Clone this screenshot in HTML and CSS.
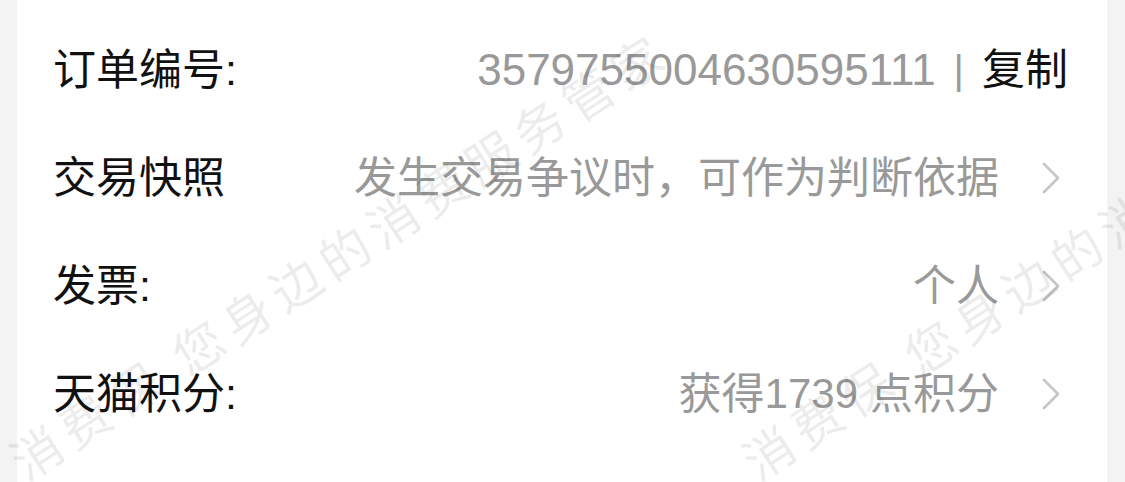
FILE: index.html
```html
<!DOCTYPE html>
<html lang="zh-CN">
<head>
<meta charset="utf-8">
<title>订单信息</title>
<link rel="stylesheet" href="styles.css">
</head>
<body>
<div class="page">
  <div class="card">
    <div class="row">
      <span class="label">订单编号:</span>
      <span class="value">
        <span class="num">3579755004630595111</span><span class="sep">|</span><span class="copy">复制</span>
      </span>
    </div>
    <div class="row">
      <span class="label">交易快照</span>
      <span class="value">发生交易争议时，可作为判断依据</span>
      <svg class="chev" viewBox="0 0 18 32" width="18" height="32"><polyline points="2,2 16,16 2,30"/></svg>
    </div>
    <div class="row">
      <span class="label">发票:</span>
      <span class="value">个人</span>
      <svg class="chev" viewBox="0 0 18 32" width="18" height="32"><polyline points="2,2 16,16 2,30"/></svg>
    </div>
    <div class="row">
      <span class="label">天猫积分:</span>
      <span class="value">获得<span class="pts">1739</span> 点积分</span>
      <svg class="chev" viewBox="0 0 18 32" width="18" height="32"><polyline points="2,2 16,16 2,30"/></svg>
    </div>
  </div>
  <div class="watermark">
    <span class="wm wm-a">消费保 您身边的消费服务管家</span>
    <span class="wm wm-b">消费保 您身边的消费服务管家</span>
  </div>
</div>
</body>
</html>
```

FILE: styles.css
```css
html, body {
  margin: 0;
  padding: 0;
}
body {
  background: #f3f3f3;
  font-family: "Liberation Sans", "Noto Sans CJK SC", sans-serif;
  width: 1125px;
  height: 482px;
  overflow: hidden;
}
.page {
  position: relative;
  width: 1125px;
  height: 482px;
  overflow: hidden;
}
.card {
  margin-left: 17px;
  width: 1090px;
  height: 482px;
  background: #ffffff;
  box-sizing: border-box;
  padding: 16px 39px 0 36px;
}
.row {
  display: flex;
  align-items: center;
  height: 108px;
  font-size: 43px;
  line-height: 50px;
}
.label {
  color: #111111;
  flex: none;
}
.value {
  margin-left: auto;
  color: #999999;
  display: flex;
  align-items: center;
  white-space: pre;
}
.num {
  font-size: 44px;
  color: #999999;
}
.pts {
  font-size: 42px;
}
.sep {
  font-size: 40px;
  color: #999999;
  margin: 0 18px;
}
.copy {
  color: #111111;
}
.chev {
  flex: none;
  margin-left: 43px;
  margin-right: 8px;
}
.chev polyline {
  fill: none;
  stroke: #c6c6c6;
  stroke-width: 2.8;
  stroke-linecap: round;
  stroke-linejoin: round;
}
.watermark {
  position: absolute;
  inset: 0;
  pointer-events: none;
}
.wm {
  position: absolute;
  font-family: "Noto Sans CJK SC", sans-serif;
  font-size: 50px;
  line-height: 50px;
  letter-spacing: 8px;
  color: rgba(0, 0, 0, 0.075);
  white-space: pre;
  transform: rotate(-33deg);
  transform-origin: 0 50%;
}
.wm-a {
  left: 14px;
  top: 439px;
}
.wm-b {
  left: 746px;
  top: 439px;
}
```
